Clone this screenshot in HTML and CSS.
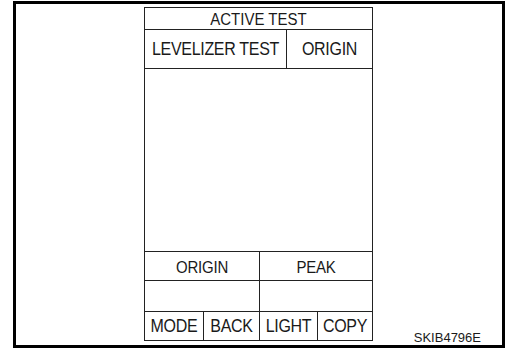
FILE: index.html
```html
<!DOCTYPE html>
<html lang="en">
<head>
    <meta charset="UTF-8">
    <title>Active Test</title>
    <link rel="stylesheet" href="styles.css">
</head>
<body>
    <div class="frame">
        <div class="panel">
            <div class="row row-title">
                <div class="cell title"><span>ACTIVE TEST</span></div>
            </div>
            <div class="row row-head">
                <div class="cell big"><span>LEVELIZER TEST</span></div>
                <div class="cell big"><span>ORIGIN</span></div>
            </div>
            <div class="row row-graph">
                <div class="cell"></div>
            </div>
            <div class="row row-half row-label">
                <div class="cell"><span>ORIGIN</span></div>
                <div class="cell"><span>PEAK</span></div>
            </div>
            <div class="row row-half row-value">
                <div class="cell"></div>
                <div class="cell"></div>
            </div>
            <div class="row row-buttons">
                <div class="cell big"><span>MODE</span></div>
                <div class="cell big"><span>BACK</span></div>
                <div class="cell big"><span>LIGHT</span></div>
                <div class="cell big"><span>COPY</span></div>
            </div>
        </div>
        <div class="code">SKIB4796E</div>
    </div>
</body>
</html>
```

FILE: styles.css
```css
body {
    margin: 0;
    padding: 1px 0 0 13px;
    font-family: "Liberation Sans", Arial, sans-serif;
    color: #1a1a1a;
    background: #fff;
}
.frame {
    width: 358px;
    height: 338px;
    border: 3px solid #000;
    display: flex;
    align-items: flex-start;
    padding: 3px 0 0 128px;
}
.panel {
    width: 227px;
    padding: 1px;
    background: #222;
    display: flex;
    flex-direction: column;
    gap: 1px;
}
.row {
    display: grid;
    gap: 1px;
}
.cell {
    background: #fff;
    display: flex;
    align-items: center;
    justify-content: center;
    font-size: 15px;
    letter-spacing: -0.2px;
    white-space: nowrap;
}
.cell span {
    display: inline-block;
    transform: scaleY(1.1);
}
.title {
    font-size: 15px;
    letter-spacing: 0;
}
.big {
    font-size: 16px;
    letter-spacing: -0.3px;
}
.big span {
    transform: scaleY(1.15);
}
.row-title { grid-template-columns: 1fr; height: 21px; }
.row-head { grid-template-columns: 141px 85px; height: 38px; }
.row-graph { grid-template-columns: 1fr; height: 182px; }
.row-half { grid-template-columns: 114px 112px; }
.row-label { height: 28px; }
.row-value { height: 30px; }
.row-buttons { grid-template-columns: 58px 55px 57px 54px; height: 28px; }
.code {
    margin-left: auto;
    margin-right: 21px;
    align-self: flex-end;
    margin-bottom: 1px;
    font-size: 13px;
    line-height: 13px;
}
```
